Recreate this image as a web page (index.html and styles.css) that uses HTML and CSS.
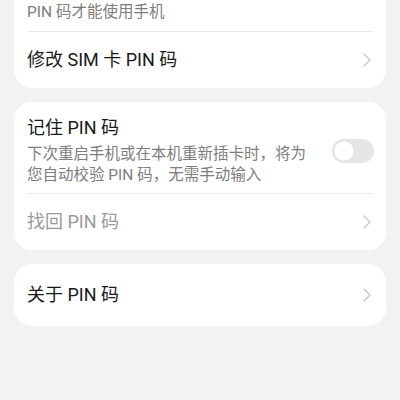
FILE: index.html
```html
<!DOCTYPE html>
<html lang="zh-CN">
<head>
<meta charset="utf-8">
<link rel="stylesheet" href="styles.css">
</head>
<body>
<div class="page">
  <section class="card card-top">
    <div class="row row-cut">
      <div class="sub">PIN 码才能使用手机</div>
    </div>
    <div class="divider"></div>
    <div class="row row-single">
      <div class="title">修改 SIM 卡 PIN 码</div>
      <svg class="chev" width="8" height="14" viewBox="0 0 8 14"><path d="M1 1 L7 7 L1 13" fill="none" stroke="#c6c6c6" stroke-width="1.4" stroke-linecap="round" stroke-linejoin="round"/></svg>
    </div>
  </section>

  <section class="card">
    <div class="row row-tall">
      <div class="text">
        <div class="title">记住 PIN 码</div>
        <div class="sub">下次重启手机或在本机重新插卡时，将为您自动校验 PIN 码，无需手动输入</div>
      </div>
      <span class="toggle"><span class="knob"></span></span>
    </div>
    <div class="divider"></div>
    <div class="row row-single">
      <div class="title disabled">找回 PIN 码</div>
      <svg class="chev" width="8" height="14" viewBox="0 0 8 14"><path d="M1 1 L7 7 L1 13" fill="none" stroke="#c6c6c6" stroke-width="1.4" stroke-linecap="round" stroke-linejoin="round"/></svg>
    </div>
  </section>

  <section class="card">
    <div class="row row-about">
      <div class="title">关于 PIN 码</div>
      <svg class="chev" width="8" height="14" viewBox="0 0 8 14"><path d="M1 1 L7 7 L1 13" fill="none" stroke="#c6c6c6" stroke-width="1.4" stroke-linecap="round" stroke-linejoin="round"/></svg>
    </div>
  </section>
</div>
</body>
</html>
```

FILE: styles.css
```css
html, body {
  margin: 0;
  padding: 0;
  background: #f1f2f4;
}
body {
  font-family: Roboto, "Noto Sans CJK SC", sans-serif;
  color: #191919;
  overflow: hidden;
  height: 400px;
}
.page {
  margin-top: -30px;
  padding: 0 14px;
  display: flex;
  flex-direction: column;
  gap: 14px;
}
.card {
  background: #ffffff;
  border-radius: 18px;
  padding: 0 12px 0 13px;
}
.row {
  display: flex;
  align-items: center;
  justify-content: space-between;
}
.row-cut {
  box-sizing: border-box;
  height: 61px;
  padding: 32px 0 8px;
}
.row-tall {
  box-sizing: border-box;
  height: 91px;
  padding: 14px 0 7px;
}
.row-single {
  height: 56px;
}
.row-about {
  height: 62px;
}
.text {
  flex: 1;
  min-width: 0;
}
.title {
  font-size: 18px;
  line-height: 24px;
}
.title.disabled {
  color: #9a9a9a;
}
.sub {
  font-size: 15.5px;
  line-height: 21px;
  color: #7d7d7d;
}
.text .sub {
  margin-top: 4px;
}
.divider {
  height: 1px;
  background: #ececec;
}
.chev {
  margin-right: 3px;
  flex: none;
}
.toggle {
  flex: none;
  margin-left: 16px;
  width: 42px;
  height: 24px;
  border-radius: 12px;
  background: #e6e6e6;
  display: flex;
  align-items: center;
  padding-left: 2px;
  box-sizing: border-box;
}
.knob {
  width: 20px;
  height: 20px;
  border-radius: 50%;
  background: #ffffff;
  box-shadow: 0 0 1px rgba(0,0,0,0.2);
}
```
